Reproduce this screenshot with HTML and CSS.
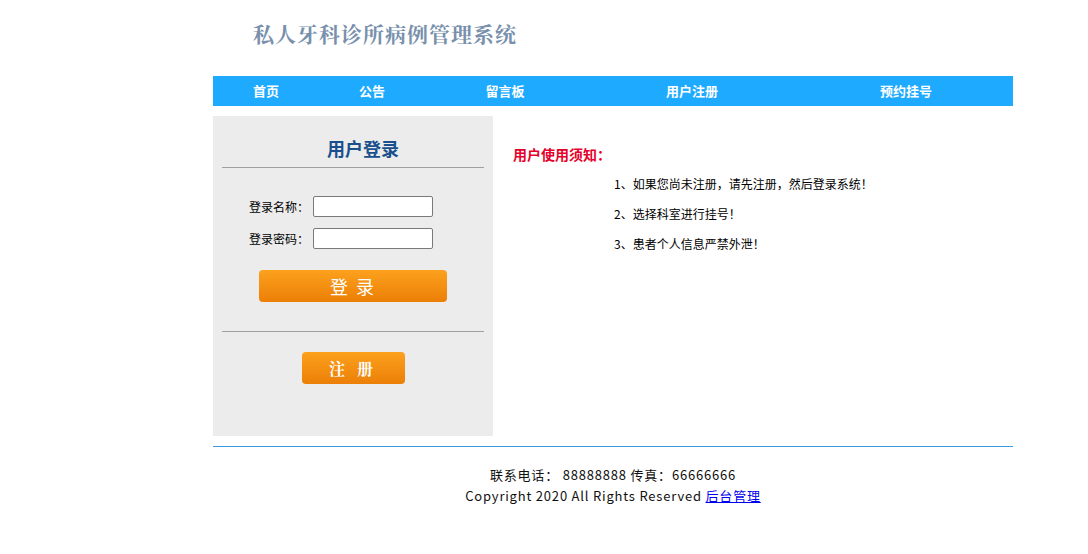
FILE: index.html
```html
<!DOCTYPE html>
<html lang="zh-CN">
<head>
  <meta charset="UTF-8">
  <title>私人牙科诊所病例管理系统</title>
  <link rel="stylesheet" href="styles.css">
</head>
<body>
  <div class="page">
    <div class="header">
      <h1>私人牙科诊所病例管理系统</h1>
    </div>

    <!-- 导航 -->
    <ul class="nav">
      <li class="n1"><a href="#">首页</a></li>
      <li class="n2"><a href="#">公告</a></li>
      <li class="n3"><a href="#">留言板</a></li>
      <li class="n4"><a href="#">用户注册</a></li>
      <li class="n5"><a href="#">预约挂号</a></li>
    </ul>

    <div class="main">
      <!-- 登录 -->
      <div class="login">
        <h2>用户登录</h2>
        <form class="login-form">
          <div class="row">
            <label>登录名称：</label>
            <input type="text">
          </div>
          <div class="row">
            <label>登录密码：</label>
            <input type="password">
          </div>
          <button type="button" class="btn-login">登 录</button>
        </form>
        <div class="reg">
          <button type="button" class="btn-reg">注 册</button>
        </div>
      </div>

      <!-- 须知 -->
      <div class="notice">
        <h3>用户使用须知：</h3>
        <ul>
          <li>1、如果您尚未注册，请先注册，然后登录系统！</li>
          <li>2、选择科室进行挂号！</li>
          <li>3、患者个人信息严禁外泄！</li>
        </ul>
      </div>
    </div>

    <div class="footer">
      <p>联系电话： 88888888 传真：66666666</p>
      <p>Copyright 2020 All Rights Reserved <a href="#">后台管理</a></p>
    </div>
  </div>
</body>
</html>
```

FILE: styles.css
```css
body {
  margin: 0;
  font-family: "Noto Sans CJK SC", sans-serif;
  font-size: 12px;
  color: #000;
  background: #fff;
}
.page {
  width: 800px;
  margin-left: 213px;
}
.header {
  height: 76px;
}
.header h1 {
  margin: 0;
  padding: 19px 0 0 40px;
  font-family: "Noto Serif CJK SC", "Noto Sans CJK SC", serif;
  font-size: 21px;
  font-weight: bold;
  line-height: 28px;
  color: #7890ac;
  letter-spacing: 1px;
}
.nav {
  list-style: none;
  margin: 0;
  padding: 0;
  height: 30px;
  background: #1eaaff;
  display: flex;
}
.nav li {
  text-align: center;
  line-height: 30px;
}
.nav a {
  color: #fff;
  font-size: 13px;
  font-weight: bold;
  text-decoration: none;
}
.nav .n1 { width: 106px; }
.nav .n2 { width: 106px; }
.nav .n3 { width: 160px; }
.nav .n4 { width: 214px; }
.nav .n5 { width: 214px; }

.main {
  display: flex;
  margin-top: 10px;
  border-bottom: 1px solid #3a9ad9;
  padding-bottom: 10px;
}
.login {
  width: 280px;
  height: 320px;
  background: #ececec;
  box-sizing: border-box;
  padding: 0 9px;
}
.login h2 {
  margin: 0;
  padding: 19px 0 0 20px;
  height: 32px;
  text-align: center;
  font-size: 18px;
  line-height: 26px;
  color: #1a4f8d;
  border-bottom: 1px solid #a0a0a0;
}
.login-form {
  padding: 28px 0 0 27px;
  height: 135px;
  border-bottom: 1px solid #a0a0a0;
}
.row {
  display: flex;
  align-items: center;
  height: 21px;
  margin-bottom: 11px;
}
.row label {
  width: 64px;
  font-size: 12px;
}
.row input {
  width: 120px;
  height: 21px;
  box-sizing: border-box;
  border: 1px solid #7a7a7a;
  border-radius: 2px;
  background: #fff;
  padding: 0 3px;
}
.btn-login {
  display: block;
  margin: 21px 0 0 10px;
  width: 188px;
  height: 32px;
  border: none;
  border-radius: 4px;
  background: linear-gradient(#fca11d, #ec7f07);
  color: #fff;
  font-family: "Noto Sans CJK SC", sans-serif;
  font-size: 18px;
  letter-spacing: 2px;
  cursor: pointer;
}
.reg {
  text-align: center;
  padding-top: 20px;
}
.btn-reg {
  width: 103px;
  height: 32px;
  border: none;
  border-radius: 4px;
  background: linear-gradient(#fca11d, #ec7f07);
  color: #fff;
  font-family: "Noto Serif CJK SC", "Noto Sans CJK SC", serif;
  font-size: 16px;
  font-weight: bold;
  letter-spacing: 4px;
  cursor: pointer;
}
.notice {
  padding: 28px 0 0 20px;
}
.notice h3 {
  margin: 0;
  font-size: 14px;
  line-height: 20px;
  color: #e4002b;
}
.notice ul {
  list-style: none;
  margin: 0;
  padding: 10px 0 0 101px;
}
.notice li {
  line-height: 20px;
  margin-bottom: 10px;
  font-size: 12px;
}
.footer {
  text-align: center;
  padding-top: 17px;
}
.footer p {
  margin: 0;
  line-height: 21px;
  font-size: 13px;
  letter-spacing: 0.8px;
  color: #111;
}
.footer a {
  color: #0000ee;
}
```
